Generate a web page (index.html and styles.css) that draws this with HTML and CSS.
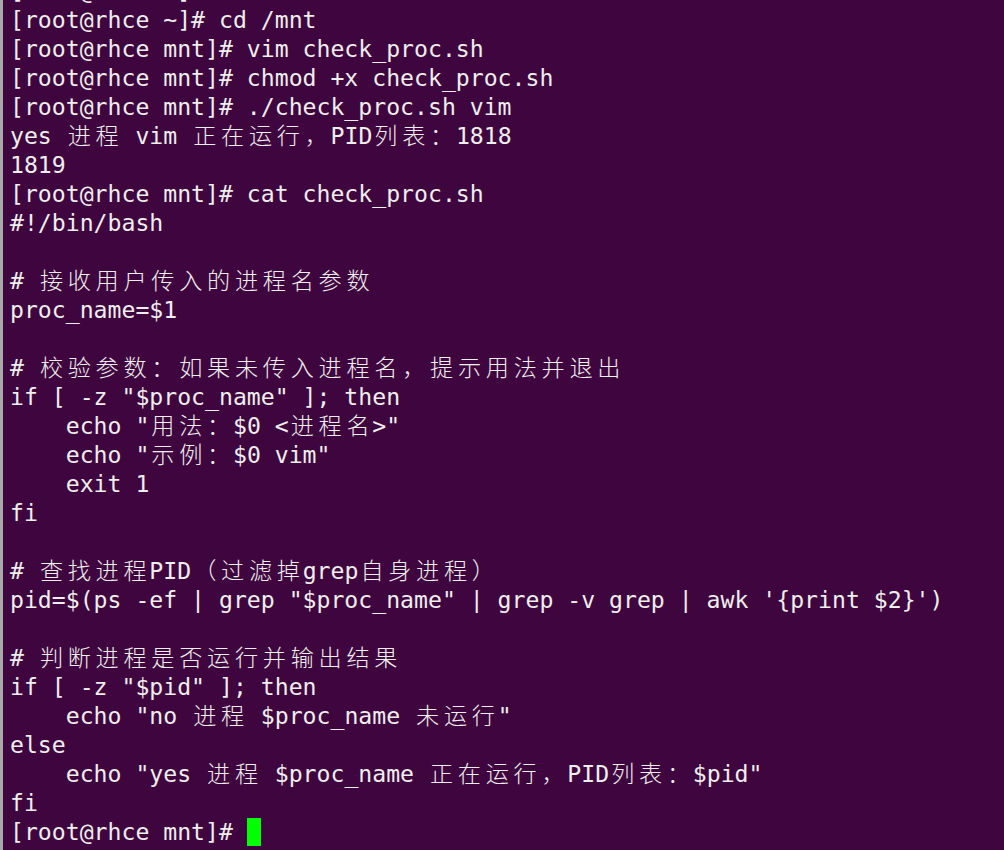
FILE: index.html
```html
<!DOCTYPE html>
<html lang="zh-CN">
<head>
<meta charset="utf-8">
<title>Terminal</title>
<link rel="stylesheet" href="styles.css">
</head>
<body>
<div class="term">
<pre class="screen"><div class="ln">[root@rhce ~]# </div><div class="ln">[root@rhce ~]# cd /mnt</div><div class="ln">[root@rhce mnt]# vim check_proc.sh</div><div class="ln">[root@rhce mnt]# chmod +x check_proc.sh</div><div class="ln">[root@rhce mnt]# ./check_proc.sh vim</div><div class="ln">yes <span class="w">进程</span> vim <span class="w">正在运行，</span>PID<span class="w">列表：</span>1818</div><div class="ln">1819</div><div class="ln">[root@rhce mnt]# cat check_proc.sh</div><div class="ln">#!/bin/bash</div><div class="ln"> </div><div class="ln"># <span class="w">接收用户传入的进程名参数</span></div><div class="ln">proc_name=$1</div><div class="ln"> </div><div class="ln"># <span class="w">校验参数：如果未传入进程名，提示用法并退出</span></div><div class="ln">if [ -z "$proc_name" ]; then</div><div class="ln">    echo "<span class="w">用法：</span>$0 &lt;<span class="w">进程名</span>&gt;"</div><div class="ln">    echo "<span class="w">示例：</span>$0 vim"</div><div class="ln">    exit 1</div><div class="ln">fi</div><div class="ln"> </div><div class="ln"># <span class="w">查找进程</span>PID<span class="w">（过滤掉</span>grep<span class="w">自身进程）</span></div><div class="ln">pid=$(ps -ef | grep "$proc_name" | grep -v grep | awk '{print $2}')</div><div class="ln"> </div><div class="ln"># <span class="w">判断进程是否运行并输出结果</span></div><div class="ln">if [ -z "$pid" ]; then</div><div class="ln">    echo "no <span class="w">进程</span> $proc_name <span class="w">未运行</span>"</div><div class="ln">else</div><div class="ln">    echo "yes <span class="w">进程</span> $proc_name <span class="w">正在运行，</span>PID<span class="w">列表：</span>$pid"</div><div class="ln">fi</div><div class="ln">[root@rhce mnt]# <span class="cursor"></span></div></pre>
</div>
</body>
</html>
```
FILE: styles.css
```css
html, body {
  margin: 0;
  padding: 0;
  height: 850px;
  overflow: hidden;
  background: #3f053f;
}

.term {
  height: 850px;
  border-left: 3px solid #a9a9a9;
  background: #3f053f;
  padding-left: 7px;
  overflow: hidden;
}

.screen {
  margin: -23px 0 0 0;
  font-family: "DejaVu Sans Mono", "Noto Sans CJK SC", monospace;
  font-size: 23.15px;
  line-height: 29px;
  color: #eeeeec;
  white-space: pre;
}

.ln {
  height: 29px;
}

.w {
  font-family: "Noto Sans CJK SC", sans-serif;
  font-weight: 300;
  line-height: 0;
  letter-spacing: 4.73px;
  position: relative;
  left: 2px;
}

.cursor {
  display: inline-block;
  width: 14px;
  height: 28px;
  background: #00ff00;
  vertical-align: top;
}
```
